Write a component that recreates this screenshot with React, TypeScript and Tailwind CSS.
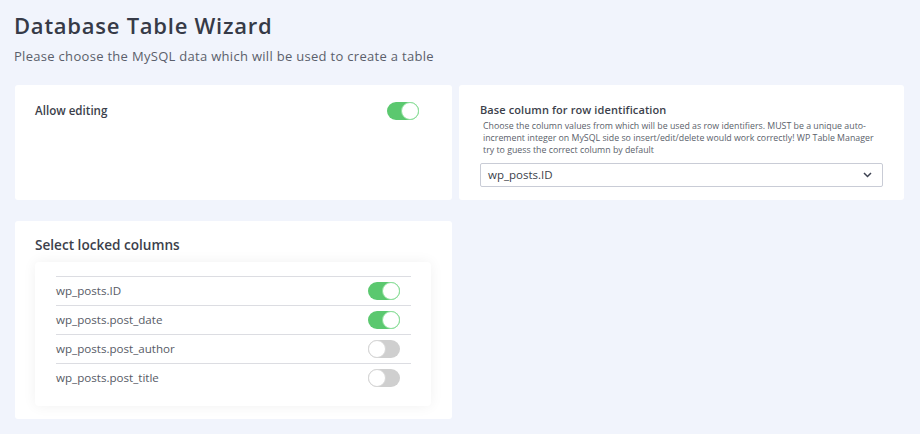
import React from "react";

function Toggle({ on }: { on: boolean }) {
  return on ? (
    <div className="relative h-[18px] w-[32px] rounded-full bg-[#5bc86f]">
      <div className="absolute right-0 top-0 h-[18px] w-[18px] rounded-full border border-[#8ee09c] bg-white" />
    </div>
  ) : (
    <div className="relative h-[18px] w-[32px] rounded-full bg-[#cfcfcf]">
      <div className="absolute left-0 top-0 h-[18px] w-[18px] rounded-full border border-[#d6d6d6] bg-white" />
    </div>
  );
}

const rows = [
  { name: "wp_posts.ID", on: true },
  { name: "wp_posts.post_date", on: true },
  { name: "wp_posts.post_author", on: false },
  { name: "wp_posts.post_title", on: false },
];

export default function App() {
  return (
    <div
      className="h-[434px] w-[920px] overflow-hidden bg-[#f1f4fc] text-[#404351]"
      style={{ fontFamily: "'Open Sans', 'Noto Sans', sans-serif" }}
    >
      <div className="px-[14px] pt-[10px]">
        <h1 className="text-[22px] font-semibold leading-[30px] tracking-[0.75px] text-[#363a47]">
          Database Table Wizard
        </h1>
        <p className="mt-[7px] text-[13px] leading-[18px] tracking-[0.3px] text-[#5b5f6b]">
          Please choose the MySQL data which will be used to create a table
        </p>
      </div>
      <div className="mt-[20px] flex gap-[7px] pl-[15px] pr-[16px]">
        <div className="h-[115px] w-[437px] rounded-[3px] bg-white pl-[20px] pr-[33px] pt-[17px]">
          <div className="flex items-center justify-between">
            <span className="text-[11.6px] font-semibold text-[#3c3f4b]">Allow editing</span>
            <Toggle on />
          </div>
        </div>
        <div className="h-[115px] flex-1 rounded-[3px] bg-white pl-[21px] pr-[21px] pt-[17px]">
          <div className="text-[11px] font-semibold leading-[16px] tracking-[0.1px] text-[#3c3f4b]">
            Base column for row identification
          </div>
          <p className="ml-[3px] mt-[2px] text-[8.8px] leading-[12px] text-[#5b5f6b]">
            <span className="block whitespace-nowrap">
              Choose the column values from which will be used as row identifiers. MUST be a unique auto-
            </span>
            <span className="block whitespace-nowrap">
              increment integer on MySQL side so insert/edit/delete would work correctly! WP Table Manager
            </span>
            <span className="block whitespace-nowrap">try to guess the correct column by default</span>
          </p>
          <div className="mt-[7px] flex h-[24px] items-center justify-between rounded-[2px] border border-[#c9ccd6] pl-[7px] pr-[10px]">
            <span className="text-[11.5px] text-[#3c3f4b]">wp_posts.ID</span>
            <svg width="9" height="6" viewBox="0 0 9 6" fill="none">
              <path d="M1 1l3.5 3.5L8 1" stroke="#3d4252" strokeWidth="1.5" />
            </svg>
          </div>
        </div>
      </div>
      <div className="mt-[21px] pl-[15px]">
        <div className="h-[198px] w-[437px] rounded-[3px] bg-white pl-[20px] pr-[21px] pt-[14px]">
          <div className="text-[13.6px] font-semibold leading-[20px] text-[#3c3f4b]">Select locked columns</div>
          <div className="mt-[7px] rounded-[4px] bg-white pb-[14px] pl-[21px] pr-[20px] pt-[14px] shadow-[0_0_14px_rgba(0,0,0,0.06)]">
            {rows.map((r) => (
              <div
                key={r.name}
                className="flex h-[29px] items-center justify-between border-t border-[#dcdde2] pr-[11px]"
              >
                <span className="text-[11.6px] text-[#575b66]">{r.name}</span>
                <Toggle on={r.on} />
              </div>
            ))}
          </div>
        </div>
      </div>
    </div>
  );
}
